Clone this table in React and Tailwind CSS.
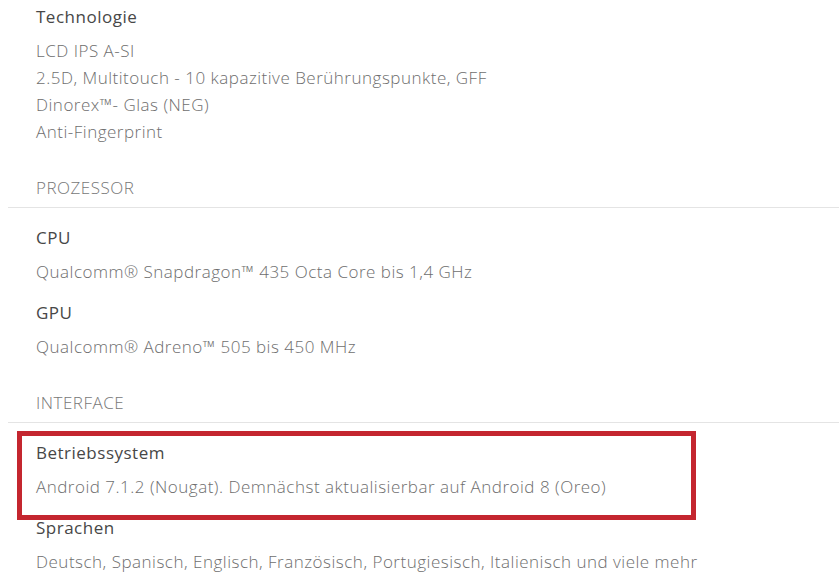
import React from 'react';

const specs = [
  {
    items: [
      {
        label: 'Technologie',
        values: [
          'LCD IPS A-SI',
          '2.5D, Multitouch - 10 kapazitive Berührungspunkte, GFF',
          'Dinorex™- Glas (NEG)',
          'Anti-Fingerprint',
        ],
      },
    ],
  },
  {
    title: 'PROZESSOR',
    items: [
      { label: 'CPU', values: ['Qualcomm® Snapdragon™ 435 Octa Core bis 1,4 GHz'] },
      { label: 'GPU', values: ['Qualcomm® Adreno™ 505 bis 450 MHz'] },
    ],
  },
  {
    title: 'INTERFACE',
    items: [
      {
        label: 'Betriebssystem',
        values: ['Android 7.1.2 (Nougat). Demnächst aktualisierbar auf Android 8 (Oreo)'],
        highlight: true,
      },
      {
        label: 'Sprachen',
        values: ['Deutsch, Spanisch, Englisch, Französisch, Portugiesisch, Italienisch und viele mehr'],
      },
    ],
  },
];

const SpecItem = ({ item }) => (
  <div className="relative">
    {item.highlight && (
      <div className="absolute left-[-19px] top-[-8px] w-[679px] h-[89px] border-[5px] border-[#c4262f] pointer-events-none" />
    )}
    <p className="text-[#474747] font-normal">{item.label}</p>
    <div className="mt-[7px]">
      {item.values.map((v) => (
        <p key={v} className="text-[#6e6e6e] font-light">{v}</p>
      ))}
    </div>
  </div>
);

const App = () => {
  return (
    <div
      className="w-[839px] h-[583px] overflow-hidden bg-white pl-2 pt-[3px] text-[17px] leading-[27px] tracking-[0.5px]"
      style={{ fontFamily: '"Open Sans", Roboto, sans-serif' }}
    >
      {specs.map((section, i) => (
        <div key={i} className={section.title ? 'mt-[29px]' : ''}>
          {section.title && (
            <div className="border-b border-[#e4e4e4] pl-7 pb-[6px]">
              <p className="text-[#777777] font-light">{section.title}</p>
            </div>
          )}
          <div className={section.title ? 'pl-7 pt-[16px] flex flex-col gap-[14px]' : 'pl-7'}>
            {section.items.map((item) => (
              <SpecItem key={item.label} item={item} />
            ))}
          </div>
        </div>
      ))}
    </div>
  );
};

export default App;
